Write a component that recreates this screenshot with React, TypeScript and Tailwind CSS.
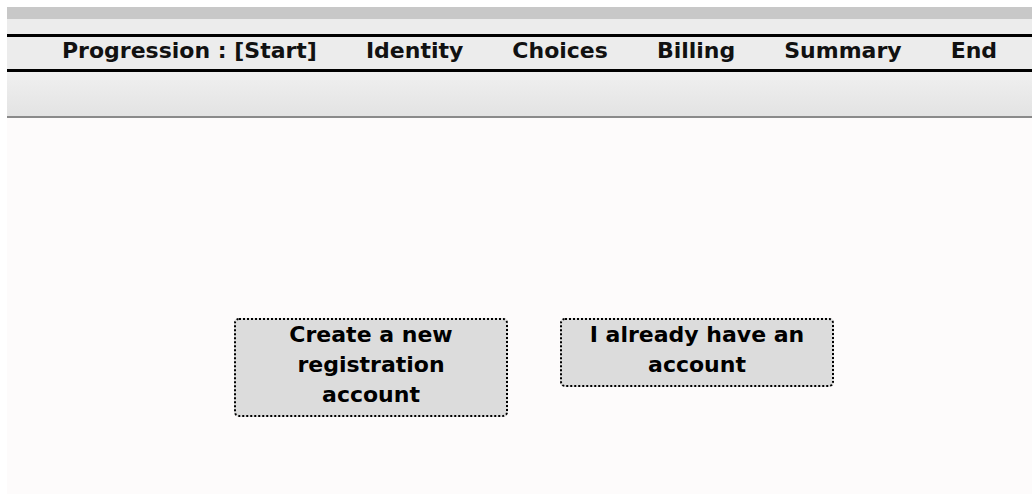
import React from 'react';

const steps = ['Progression : [Start]', 'Identity', 'Choices', 'Billing', 'Summary', 'End'];

function ChoiceButton({ lines }: { lines: string[] }) {
  return (
    <button
      type="button"
      className="w-[274px] rounded-[5px] border-2 border-dotted border-black bg-[#dcdcdc] pb-[5px] text-center text-[22px] font-bold leading-[30px] text-black"
    >
      {lines.map((l, i) => (
        <span key={i} className="block">
          {l}
        </span>
      ))}
    </button>
  );
}

export default function App() {
  return (
    <div className="flex min-h-screen flex-col bg-white pl-[7px] pt-[7px] font-['DejaVu_Sans',sans-serif]">
      {/* top chrome */}
      <div className="h-[12px] bg-[#c8c8c8]" />
      <div className="h-[15px] bg-[#ececec]" />

      {/* progress steps */}
      <nav className="h-[38px] border-y-[3px] border-black bg-[#ececec]">
        <ul className="flex gap-[49px] pl-[55px] text-[22px] font-bold leading-[27px] text-[#111]">
          {steps.map((s) => (
            <li key={s}>{s}</li>
          ))}
        </ul>
      </nav>

      <div className="h-[46px] border-b-2 border-[#8a8a8a] bg-gradient-to-b from-[#f0f0f0] to-[#e3e3e3]" />

      {/* account choice */}
      <main className="flex flex-1 items-start gap-[52px] bg-[#fdfbfb] pl-[227px] pt-[200px]">
        <ChoiceButton lines={['Create a new', 'registration', 'account']} />
        <ChoiceButton lines={['I already have an', 'account']} />
      </main>
    </div>
  );
}
